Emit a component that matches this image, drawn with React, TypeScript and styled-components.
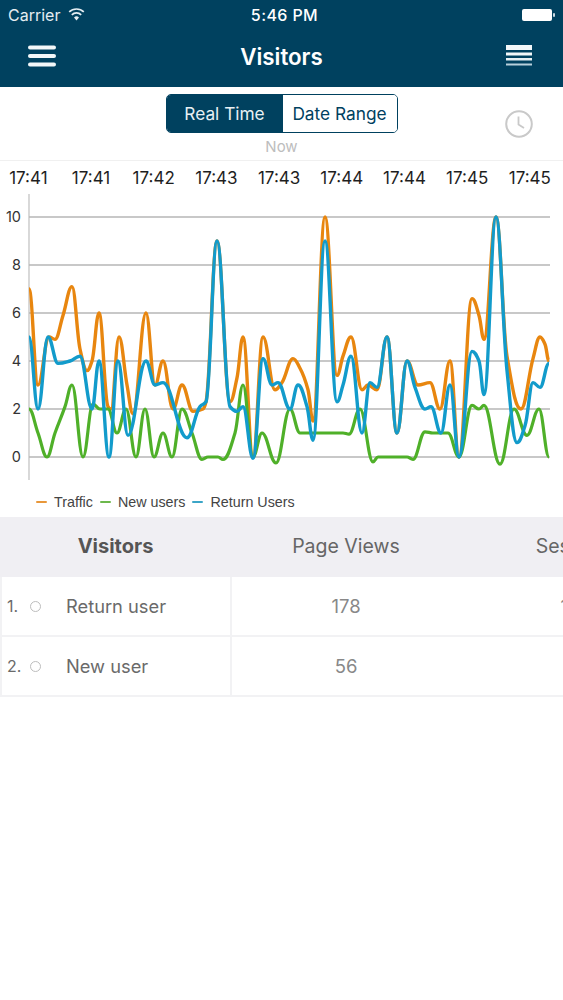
import React from "react";
import styled, { createGlobalStyle } from "styled-components";

const GlobalStyle = createGlobalStyle`
  html, body {
    margin: 0;
    padding: 0;
    background: #fff;
    font-family: Inter, "Noto Sans", sans-serif;
  }
`;

const Page = styled.div`
  width: 563px;
  height: 1000px;
  overflow: hidden;
  background: #fff;
`;

const Header = styled.header`
  height: 87px;
  box-sizing: border-box;
  background: #00415f;
  color: #fff;
`;

const StatusBar = styled.div`
  display: grid;
  grid-template-columns: 1fr auto 1fr;
  align-items: center;
  height: 29px;
  padding: 0 8px;
`;

const Carrier = styled.div`
  display: flex;
  align-items: center;
  gap: 8px;
  font-size: 16px;
  color: #e4edf2;
`;

const Clock = styled.div`
  margin-left: 6px;
  font-size: 16px;
  font-weight: 500;
  letter-spacing: 0.4px;
`;

const Battery = styled.svg`
  justify-self: end;
`;

const NavBar = styled.div`
  display: flex;
  align-items: center;
  justify-content: space-between;
  height: 54px;
  padding: 0 31px 0 27px;
`;

const NavTitle = styled.h1`
  margin: 0;
  font-size: 22.3px;
  font-weight: 600;
`;

const Controls = styled.div`
  position: relative;
  height: 74px;
  box-sizing: border-box;
  border-bottom: 1px solid #f0f0f0;
  padding-top: 7px;
  display: flex;
  flex-direction: column;
  align-items: center;
`;

const Segmented = styled.div`
  display: flex;
  width: 232px;
  height: 39px;
  box-sizing: border-box;
  border: 1.5px solid #00415f;
  border-radius: 5px;
  overflow: hidden;
`;

const Segment = styled.div<{ $active?: boolean }>`
  flex: ${(p) => (p.$active ? "0 0 116px" : "1")};
  display: flex;
  align-items: center;
  justify-content: center;
  font-size: 17.3px;
  background: ${(p) => (p.$active ? "#00415f" : "#fff")};
  color: ${(p) => (p.$active ? "#e8f0f4" : "#00415f")};
`;

const NowLabel = styled.div`
  margin-top: 4px;
  font-size: 15px;
  color: #bdbdbd;
`;

const ClockButton = styled.svg`
  position: absolute;
  right: 29px;
  top: 22px;
`;

const TimeAxis = styled.div`
  display: grid;
  grid-template-columns: repeat(9, 62.7px);
  height: 31px;
  align-items: center;
  padding-top: 3px;
  margin-left: -3px;
  box-sizing: border-box;
  font-size: 17px;
  text-align: center;
  color: #1e1e1e;
`;

const ChartSvg = styled.svg`
  display: block;
`;

const Legend = styled.div`
  display: flex;
  align-items: center;
  height: 37px;
  padding: 7px 0 0 36px;
  box-sizing: border-box;
  font-family: "Liberation Sans", Arial, sans-serif;
  font-size: 14.3px;
  color: #444;
`;

const LegendItem = styled.div`
  display: flex;
  align-items: center;
  gap: 7px;
  margin-right: 7px;
`;

const LegendSwatch = styled.span<{ $color: string }>`
  width: 11px;
  height: 2.5px;
  border-radius: 1px;
  background: ${(p) => p.$color};
`;

const HeaderRow = styled.div`
  display: grid;
  grid-template-columns: 231px 230px 232px;
  height: 60px;
  padding-bottom: 2px;
  box-sizing: border-box;
  align-items: center;
  background: #f0eff3;
  width: 563px;
`;

const HeaderCell = styled.div<{ $bold?: boolean }>`
  text-align: center;
  white-space: nowrap;
  font-size: ${(p) => (p.$bold ? "20px" : "19.5px")};
  font-weight: ${(p) => (p.$bold ? 700 : 400)};
  color: ${(p) => (p.$bold ? "#555" : "#666")};
`;

const Row = styled.div`
  display: grid;
  grid-template-columns: 232px 228px 230px;
  height: 58px;
  width: 563px;
  border-bottom: 2px solid #f2f2f4;
`;

const NameCell = styled.div`
  display: flex;
  align-items: center;
  padding-left: 5px;
  border-left: 2px solid #f2f2f4;
  border-right: 2px solid #f2f2f4;
  font-size: 18.3px;
  color: #6a6a6a;
`;

const RowIndex = styled.span`
  width: 23px;
  font-size: 16px;
`;

const Dot = styled.span`
  width: 9px;
  height: 9px;
  border: 1px solid #bdbdbd;
  border-radius: 50%;
  margin-right: 25px;
`;

const ValueCell = styled.div`
  display: flex;
  align-items: center;
  justify-content: center;
  font-size: 18.5px;
  color: #888;
`;

const times = ["17:41", "17:41", "17:42", "17:43", "17:43", "17:44", "17:44", "17:45", "17:45"];

const orange: number[][] = [
  [29, 7], [38, 3], [49, 5], [55, 4.9], [63, 5.9], [72, 7.1], [80, 4.5], [87, 3.6], [92, 4], [99, 6], [108, 2.1],
  [111, 2], [119, 5], [127, 3], [133, 1.8], [146, 6], [155, 3], [163, 4], [173, 2], [182, 3], [193, 1.9], [203, 2],
  [206, 2.3], [217, 9], [230, 2.3], [237, 3.3], [243, 5], [253, 0], [263, 5], [275, 2.8], [282, 3.1], [293, 4.1],
  [300, 3.7], [308, 2.8], [313, 1.5], [325, 10], [337, 3.4], [343, 4.2], [351, 5], [362, 2.8], [368, 3], [377, 2.8],
  [387, 5], [397, 1], [407, 4], [418, 3], [430, 3.1], [440, 2], [450, 4], [459, 0], [472, 6.6], [479, 5.9], [484, 4.9],
  [496, 10], [507, 4.2], [521, 2], [533, 4.1], [540, 5], [545, 4.7], [549, 4],
];

const green: number[][] = [
  [29, 2], [38, 1], [47, 0], [55, 1], [65, 2.1], [72, 3], [83, 0], [93, 2.2], [100, 2], [108, 2], [117, 1], [126, 2],
  [136, 0], [145, 2], [154, 0], [163, 1], [172, 0], [182, 2], [192, 1], [202, -0.1], [208, 0], [218, 0], [223, -0.1],
  [235, 1], [243, 3], [253, 0], [262, 1], [276, -0.25], [290, 2], [300, 1], [307, 1], [325, 1], [343, 1], [349, 0.95],
  [360, 2], [373, -0.2], [378, 0], [392, 0], [407, 0], [413, -0.1], [425, 1.05], [433, 1], [448, 1], [459, 0],
  [472, 2.15], [479, 2], [484, 2.15], [500, -0.3], [514, 2], [527, 0.9], [539, 2], [549, 0],
];

const blue: number[][] = [
  [29, 5], [38, 2], [48, 5], [58, 3.9], [70, 4], [80, 4.2], [92, 2], [99, 4], [109, 0], [118, 4], [128, 0.9], [146, 4],
  [155, 3], [163, 3.1], [187, 0.8], [200, 2.1], [206, 2.3], [217, 9], [230, 2.1], [237, 1.9], [243, 2.1], [253, -0.05],
  [263, 4.1], [272, 3], [278, 3.1], [290, 2], [298, 3], [307, 2.1], [313, 0.7], [325, 9], [337, 2.3], [343, 3], [351, 4.2],
  [362, 1], [370, 3.1], [377, 2.9], [387, 5], [397, 1], [407, 4], [415, 2.9], [425, 2], [431, 2.1], [441, 1], [450, 3],
  [459, 0], [472, 4.4], [479, 4], [484, 2.6], [496, 10], [507, 3.6], [517, 0.6], [525, 1.3], [533, 3.1], [540, 2.9], [549, 3.9],
];

// chart svg starts at page y=192, value 0 sits at 457 and one unit is 24px
const toY = (v: number) => 265 - v * 24;

// flat tangent on every local peak/dip so the points stay the real extremes
const smoothPath = (points: number[][]) => {
  const pts = points.map(([x, v]) => [x, toY(v)]);
  const slopes = pts.map((p, i) => {
    const prev = pts[i - 1];
    const next = pts[i + 1];
    if (!prev || !next) return 0;
    const a = (p[1] - prev[1]) / (p[0] - prev[0]);
    const b = (next[1] - p[1]) / (next[0] - p[0]);
    if (a * b <= 0) return 0;
    return (2 * a * b) / (a + b);
  });
  let d = `M${pts[0][0]} ${pts[0][1]}`;
  for (let i = 0; i < pts.length - 1; i++) {
    const [x1, y1] = pts[i];
    const [x2, y2] = pts[i + 1];
    const h = (x2 - x1) * 0.4;
    d += ` C${(x1 + h).toFixed(1)} ${(y1 + slopes[i] * h).toFixed(1)} ${(x2 - h).toFixed(1)} ${(y2 - slopes[i + 1] * h).toFixed(1)} ${x2} ${y2.toFixed(1)}`;
  }
  return d;
};

const Chart = () => (
  <ChartSvg width={563} height={288} viewBox="0 0 563 288">
    <line x1={29} y1={2} x2={29} y2={288} stroke="#c4c4c4" strokeWidth={1.3} />
    {[0, 2, 4, 6, 8, 10].map((v) => (
      <g key={v}>
        <line x1={29} x2={550} y1={toY(v)} y2={toY(v)} stroke="#b6b6b6" strokeWidth={1.4} />
        <text x={21} y={toY(v) + 5} textAnchor="end" fontSize={14.5} fontFamily="Inter, sans-serif" fill="#333">
          {v}
        </text>
      </g>
    ))}
    <path d={smoothPath(orange)} fill="none" stroke="#e8860f" strokeWidth={3.4} strokeLinejoin="round" />
    <path d={smoothPath(green)} fill="none" stroke="#4fb029" strokeWidth={3.2} strokeLinejoin="round" />
    <path d={smoothPath(blue)} fill="none" stroke="#129bcb" strokeWidth={3.4} strokeLinejoin="round" />
  </ChartSvg>
);

const rows = [
  { name: "Return user", views: 178, sessions: 178 },
  { name: "New user", views: 56, sessions: 56 },
];

export default function App() {
  return (
    <Page>
      <GlobalStyle />
      <Header>
        <StatusBar>
          <Carrier>
            Carrier
            <svg width="17" height="13" viewBox="0 0 17 13">
              <path d="M8.5 12.5 6 9.4a3.6 3.6 0 0 1 5 0z" fill="#e4edf2" />
              <path d="M3.8 6.8a6.8 6.8 0 0 1 9.4 0M1.2 3.9a10.6 10.6 0 0 1 14.6 0" fill="none" stroke="#e4edf2" strokeWidth={1.7} />
            </svg>
          </Carrier>
          <Clock>5:46 PM</Clock>
          <Battery width="33" height="14" viewBox="0 0 33 14">
            <rect x="0" y="1" width="30" height="12" rx="2" fill="#fff" />
            <rect x="31" y="5" width="2" height="4" rx="1" fill="#c9d9e2" />
          </Battery>
        </StatusBar>
        <NavBar>
          <svg width="30" height="22" viewBox="0 0 30 22">
            <rect x="1" y="0.5" width="28" height="4" rx="2" fill="#f2f7f9" />
            <rect x="1" y="9" width="28" height="4" rx="2" fill="#f2f7f9" />
            <rect x="1" y="17.5" width="28" height="4" rx="2" fill="#f2f7f9" />
          </svg>
          <NavTitle>Visitors</NavTitle>
          <svg width="26" height="24" viewBox="0 0 26 24">
            <rect x="0" y="1" width="26" height="5" fill="#f2f7f9" />
            <rect x="0" y="8.5" width="26" height="3" fill="#f2f7f9" />
            <rect x="0" y="14" width="26" height="2.5" fill="#e6eff3" />
            <rect x="0" y="19.5" width="26" height="2" fill="#b7d0db" />
          </svg>
        </NavBar>
      </Header>
      <Controls>
        <Segmented>
          <Segment $active>Real Time</Segment>
          <Segment>Date Range</Segment>
        </Segmented>
        <NowLabel>Now</NowLabel>
        <ClockButton width="30" height="30" viewBox="0 0 30 30">
          <circle cx="15" cy="15" r="12.8" fill="none" stroke="#c9c9c9" strokeWidth={2} />
          <path d="M14.5 7.5V15.5L20 19" fill="none" stroke="#c9c9c9" strokeWidth={1.8} />
        </ClockButton>
      </Controls>
      <TimeAxis>
        {times.map((t, i) => (
          <span key={i}>{t}</span>
        ))}
      </TimeAxis>
      <Chart />
      <Legend>
        <LegendItem>
          <LegendSwatch $color="#e8973a" />
          Traffic
        </LegendItem>
        <LegendItem>
          <LegendSwatch $color="#6cb84c" />
          New users
        </LegendItem>
        <LegendItem>
          <LegendSwatch $color="#3ba5c7" />
          Return Users
        </LegendItem>
      </Legend>
      <HeaderRow>
        <HeaderCell $bold>Visitors</HeaderCell>
        <HeaderCell>Page Views</HeaderCell>
        <HeaderCell>Sessions</HeaderCell>
      </HeaderRow>
      {rows.map((row, i) => (
        <Row key={row.name}>
          <NameCell>
            <RowIndex>{i + 1}.</RowIndex>
            <Dot />
            {row.name}
          </NameCell>
          <ValueCell>{row.views}</ValueCell>
          <ValueCell>{row.sessions}</ValueCell>
        </Row>
      ))}
    </Page>
  );
}
